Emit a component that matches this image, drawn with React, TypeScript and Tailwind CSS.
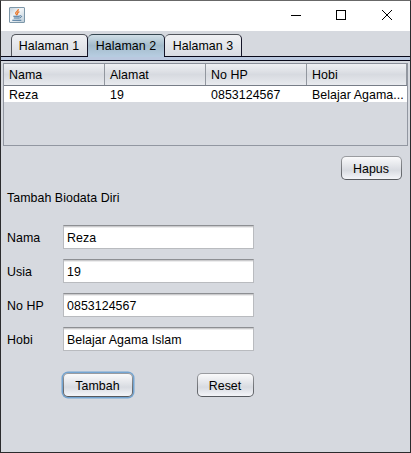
import React from "react";

const fields = [
  { label: "Nama", value: "Reza" },
  { label: "Usia", value: "19" },
  { label: "No HP", value: "0853124567" },
  { label: "Hobi", value: "Belajar Agama Islam" },
];

const columns = [
  { head: "Nama", cell: "Reza" },
  { head: "Alamat", cell: "19" },
  { head: "No HP", cell: "0853124567" },
  { head: "Hobi", cell: "Belajar Agama..." },
];

function JavaIcon() {
  return (
    <svg className="ml-2 mt-[6px] h-4 w-4" viewBox="0 0 16 16">
      <defs>
        <linearGradient id="tile" x1="0" y1="0" x2="1" y2="1">
          <stop offset="0" stopColor="#c3d0da" />
          <stop offset="0.45" stopColor="#f3f6f8" />
          <stop offset="1" stopColor="#b9cad6" />
        </linearGradient>
      </defs>
      <rect x="0.5" y="0.5" width="15" height="15" rx="0.5" fill="url(#tile)" stroke="#7d97a9" />
      <path d="M9.3 2.2c.5 2-3.4 2.5-2.6 4.3.3.7 1 1 .9 1.8M10.4 4.6C8.7 5.3 8 6.3 8.8 7.6" fill="none" stroke="#e8762a" strokeWidth="1.3" />
      <path d="M4.3 9.2h6.4M4.8 11h5.4M3.3 13.2h9" fill="none" stroke="#416f96" strokeWidth="1.1" />
      <path d="M10.6 8.8c2.8-.5 2.3 1.7-.2 2.2" fill="none" stroke="#416f96" strokeWidth="1" />
    </svg>
  );
}

function Button({ children, className = "" }: { children: React.ReactNode; className?: string }) {
  return (
    <button className={`h-6 rounded-[5px] bg-linear-to-b from-[#9b9da1] to-[#55585d] p-px ${className}`}>
      <span className="flex h-full items-center justify-center rounded-[4px] bg-linear-to-b from-[#fafafb] via-[#d8dbe1] via-60% to-[#f4f5f9] pr-px pt-[2px]">
        {children}
      </span>
    </button>
  );
}

export default function App() {
  return (
    <div className="h-[453px] w-[411px] overflow-hidden border border-[#2b2b2d] border-t-[#686868] bg-[#d6d9df] font-['Liberation_Sans',Arial,sans-serif] text-[12.4px] leading-[15px] tracking-[0.05px] text-black">
      <div className="flex h-[30px] justify-between bg-white">
        <JavaIcon />
        <svg className="h-[30px] w-[137px]" viewBox="273 1 137 30" fill="none" stroke="#000" shapeRendering="crispEdges">
          <path d="M291 15.5h10M336.5 10.5h9v9h-9z" />
          <path d="M382 10l10 10M392 10l-10 10" shapeRendering="auto" />
        </svg>
      </div>

      <div className="flex h-[25px] pl-[10px] pt-[3px]">
        <div className="flex h-[22px] w-[77px] items-center justify-center rounded-t-[5px] border border-b-0 border-[#53565d] border-r-[#151528] bg-linear-to-b from-[#f0f1f4] to-[#d9dce2] pr-px pt-px">
          Halaman 1
        </div>
        <div className="flex h-[22px] w-[77px] items-center justify-center rounded-t-[5px] border border-b-0 border-l-0 border-[#151528] border-t-[#34454f] bg-linear-to-b from-[#d0dee6] via-[#a3bbcb] via-50% to-[#b6cce0] pt-px">
          Halaman 2
        </div>
        <div className="flex h-[22px] w-[77px] items-center justify-center rounded-t-[5px] border border-b-0 border-l-0 border-[#53565d] border-r-[#151528] bg-linear-to-b from-[#f0f1f4] to-[#d9dce2] pt-px">
          Halaman 3
        </div>
      </div>
      <div className="flex h-[5px] flex-col border-y border-[#080818] bg-[#bac8df]">
        <div className="-mt-px ml-[87px] h-px w-[76px] bg-[#b6cce0]" />
      </div>

      <div className="ml-[2px] mt-[2px] h-[83px] w-[405px] border border-[#9297a1] border-t-[#8b909a]">
        <div className="grid h-[22px] grid-cols-[101px_101px_101px_100px] border-b border-[#777d87] bg-linear-to-b from-[#eff0f3] via-[#d7dae0] via-50% to-[#e8eaee]">
          {columns.map((c) => (
            <div key={c.head} className="border-r border-[#92979f] pl-[5px] pt-[4px]">{c.head}</div>
          ))}
        </div>
        <div className="grid h-4 grid-cols-[101px_101px_101px_100px] bg-white">
          {columns.map((c) => (
            <div key={c.head} className="whitespace-nowrap pl-[5px] pt-[2px] leading-[14px]">{c.cell}</div>
          ))}
        </div>
      </div>

      <div className="mt-[10px] flex justify-end pr-2">
        <Button className="w-[61px]">Hapus</Button>
      </div>

      <div className="ml-[6px] mt-[11px]">Tambah Biodata Diri</div>

      <div className="mt-[19px] flex flex-col gap-[10px] pl-[6px]">
        {fields.map((f) => (
          <div key={f.label} className="flex h-6 items-center">
            <label className="w-14 pt-[3px]">{f.label}</label>
            <div className="flex h-6 w-[191px] items-center border border-[#b9bbbf] border-t-[#8d8f93] bg-white pl-[3px] pt-[3px] shadow-[inset_0_1px_0_#cbcbcd,inset_0_2px_0_#ececed]">
              {f.value}
            </div>
          </div>
        ))}
      </div>

      <div className="mt-[22px] flex justify-between pl-[62px] pr-[156px]">
        <Button className="w-[70px] shadow-[0_0_0_1.5px_#73a4d1]">Tambah</Button>
        <Button className="w-[57px]">Reset</Button>
      </div>
    </div>
  );
}
